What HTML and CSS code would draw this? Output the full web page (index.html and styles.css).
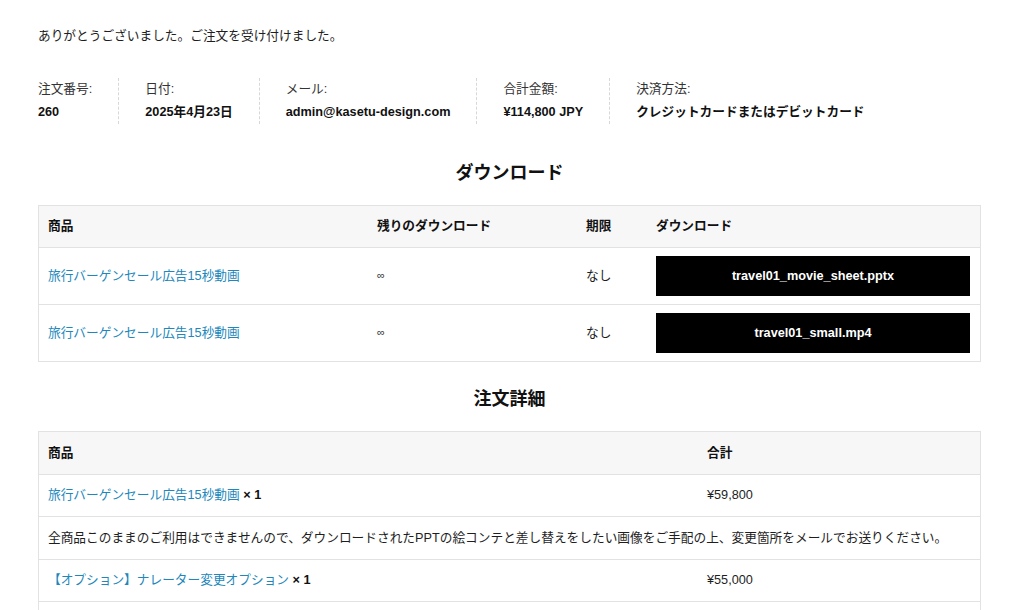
FILE: index.html
```html
<!DOCTYPE html>
<html lang="ja">
<head>
<meta charset="utf-8">
<link rel="stylesheet" href="styles.css">
</head>
<body>
<main class="page">
  <p class="thanks">ありがとうございました。ご注文を受け付けました。</p>

  <ul class="overview">
    <li class="ov-item">注文番号:<strong>260</strong></li>
    <li class="ov-item">日付:<strong>2025年4月23日</strong></li>
    <li class="ov-item">メール:<strong>admin@kasetu-design.com</strong></li>
    <li class="ov-item">合計金額:<strong>¥114,800 JPY</strong></li>
    <li class="ov-item">決済方法:<strong>クレジットカードまたはデビットカード</strong></li>
  </ul>

  <h2 class="sec-title first">ダウンロード</h2>
  <table class="tbl dl">
    <thead>
      <tr>
        <th class="c-prod">商品</th>
        <th class="c-rem">残りのダウンロード</th>
        <th class="c-exp">期限</th>
        <th class="c-file">ダウンロード</th>
      </tr>
    </thead>
    <tbody>
      <tr>
        <td><a href="#">旅行バーゲンセール広告15秒動画</a></td>
        <td class="inf">∞</td>
        <td>なし</td>
        <td><a class="btn" href="#">travel01_movie_sheet.pptx</a></td>
      </tr>
      <tr>
        <td><a href="#">旅行バーゲンセール広告15秒動画</a></td>
        <td class="inf">∞</td>
        <td>なし</td>
        <td><a class="btn" href="#">travel01_small.mp4</a></td>
      </tr>
    </tbody>
  </table>

  <h2 class="sec-title second">注文詳細</h2>
  <table class="tbl od">
    <thead>
      <tr>
        <th class="c-name">商品</th>
        <th class="c-total">合計</th>
      </tr>
    </thead>
    <tbody>
      <tr>
        <td><a href="#">旅行バーゲンセール広告15秒動画</a> <strong class="qty">× 1</strong></td>
        <td>¥59,800</td>
      </tr>
      <tr>
        <td class="note" colspan="2">全商品このままのご利用はできませんので、ダウンロードされたPPTの絵コンテと差し替えをしたい画像をご手配の上、変更箇所をメールでお送りください。</td>
      </tr>
      <tr>
        <td><a href="#">【オプション】ナレーター変更オプション</a> <strong class="qty">× 1</strong></td>
        <td>¥55,000</td>
      </tr>
      <tr>
        <td>&nbsp;</td>
        <td>&nbsp;</td>
      </tr>
    </tbody>
  </table>
</main>
</body>
</html>
```

FILE: styles.css
```css
html, body {
  margin: 0;
  padding: 0;
  background: #fff;
}
body {
  font-family: "Liberation Sans", "Noto Sans CJK JP", sans-serif;
  font-size: 12.7px;
  color: #1e1e1e;
  line-height: 1.6;
}
.page {
  padding: 0 43px 0 38px;
}
.thanks {
  margin: 26px 0 0;
  line-height: 21px;
}
.overview {
  list-style: none;
  margin: 31px 0 0;
  padding: 0;
  display: flex;
}
.ov-item {
  display: flex;
  flex-direction: column;
  line-height: 23px;
  padding: 0 26px;
  border-right: 1px dashed #d6d6dc;
  color: #333;
}
.ov-item:first-child { padding-left: 0; }
.ov-item:last-child { border-right: 0; }
.ov-item strong {
  font-weight: 700;
  color: #111;
}
.sec-title {
  margin: 0 0 20px;
  text-align: center;
  font-size: 18px;
  line-height: 28px;
  font-weight: 700;
  color: #111;
}
.sec-title.first { margin-top: 35px; margin-bottom: 18px; }
.sec-title.second { margin-top: 23px; margin-bottom: 18px; }
.tbl {
  width: 100%;
  border-collapse: collapse;
  border: 1px solid #e2e2e2;
}
.tbl th, .tbl td {
  text-align: left;
  padding: 0 9px;
  border-bottom: 1px solid #e2e2e2;
  vertical-align: middle;
}
.tbl th {
  background: #f7f7f7;
  font-weight: 700;
  color: #111;
}
.tbl a {
  color: #2187bb;
  text-decoration: none;
}
.dl thead tr { height: 42px; }
.dl tbody tr { height: 57px; }
.dl .c-prod { width: 311px; }
.dl .c-rem { width: 191px; }
.dl .c-exp { width: 52px; }
.dl .inf { font-size: 11px; color: #333; }
.dl td:last-child { padding-right: 10px; }
.btn {
  display: flex;
  align-items: center;
  justify-content: center;
  height: 40px;
  background: #000;
  color: #fff !important;
  font-weight: 700;
  font-size: 12.7px;
}
.od thead tr { height: 43px; }
.od tbody tr { height: 42px; }
.od tbody tr:nth-child(2) { height: 43px; }
.od .c-name { width: 641px; }
.note { white-space: nowrap; }
.qty { font-weight: 700; color: #111; }
```
